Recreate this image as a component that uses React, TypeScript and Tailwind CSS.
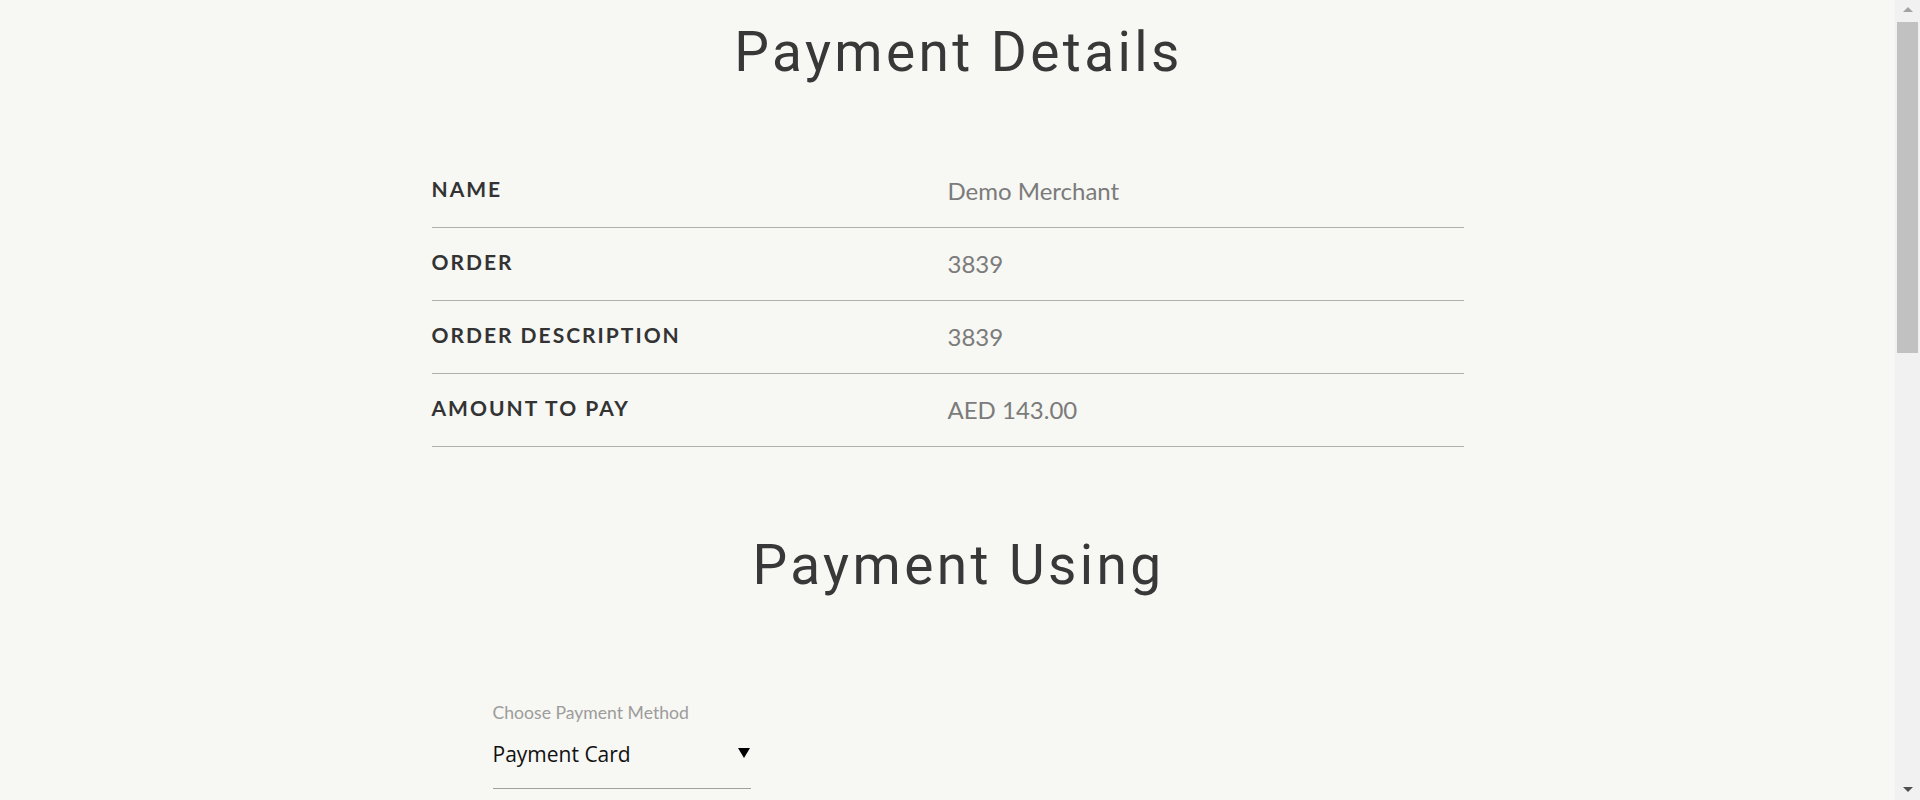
import React from 'react';

const rows = [
  { label: 'Name', value: 'Demo Merchant' },
  { label: 'Order', value: '3839' },
  { label: 'Order Description', value: '3839' },
  { label: 'Amount to Pay', value: 'AED 143.00' },
];

function SectionTitle({ children }: { children: React.ReactNode }) {
  return (
    <h1 className="pl-[22px] text-center font-['Roboto',sans-serif] text-[55px] leading-[55px] font-normal tracking-[3.4px] text-[#383838]">
      {children}
    </h1>
  );
}

function Scrollbar() {
  return (
    <div className="flex w-[25px] shrink-0 flex-col items-center bg-[#f1f1f1]">
      <span className="mt-[7px] h-0 w-0 border-x-[5px] border-b-[5px] border-x-transparent border-b-[#a3a3a3]" />
      <div className="mt-[10px] h-[331px] w-[21px] bg-[#c1c1c1]" />
      <span className="mt-auto mb-[8px] h-0 w-0 border-x-[5px] border-t-[5px] border-x-transparent border-t-[#505050]" />
    </div>
  );
}

export default function App() {
  return (
    <div className="flex h-[800px] overflow-hidden bg-[#f7f7f3] font-['Lato',sans-serif]">
      <main className="flex-1 pt-[25px]">
        <SectionTitle>Payment Details</SectionTitle>

        {/* Merchant / order summary */}
        <div className="mx-auto mt-[75px] w-[1032px]">
          {rows.map((row) => (
            <div key={row.label} className="grid grid-cols-2 items-start border-b border-[#b0b0b0] pt-[19px] pb-[20px]">
              <span className="text-[21px] leading-[30px] font-bold uppercase tracking-[2px] text-[#333]">
                {row.label}
              </span>
              <span className="text-[24px] leading-[33px] text-[#7b7b7b]">{row.value}</span>
            </div>
          ))}
        </div>

        <div className="mt-[91px]">
          <SectionTitle>Payment Using</SectionTitle>
        </div>

        <div className="mx-auto mt-[111px] w-[1032px]">
          <div className="ml-[61px] w-[258px]">
            <label className="block text-[17.6px] leading-[18px] text-[#9c9c9c]">Choose Payment Method</label>
            <div className="mt-[18px] flex items-center justify-between border-b border-[#a0a0a0] pb-[19px]">
              <span className="font-['Open_Sans',sans-serif] text-[21px] leading-[29px] text-[#111]">Payment Card</span>
              <span className="mr-[1px] -mt-[4px] h-0 w-0 border-x-[6px] border-t-[10px] border-x-transparent border-t-black" />
            </div>
          </div>
        </div>
      </main>
      <Scrollbar />
    </div>
  );
}
